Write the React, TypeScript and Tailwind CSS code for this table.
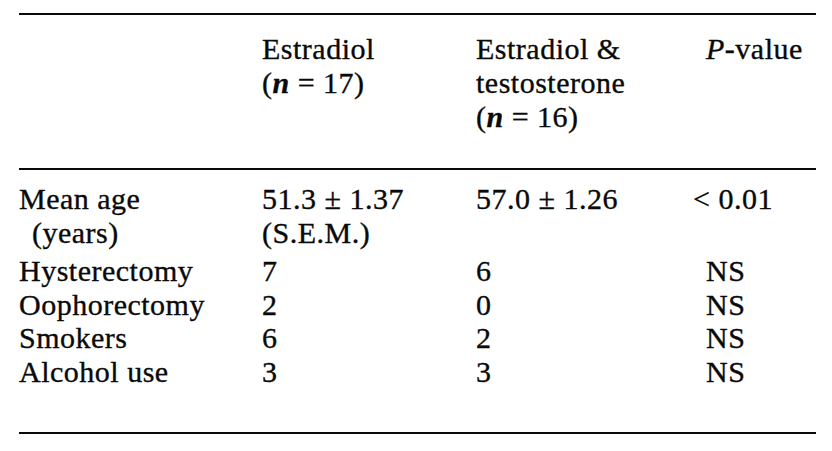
const rows = [
  { label: "Hysterectomy", a: "7", b: "6", p: "NS" },
  { label: "Oophorectomy", a: "2", b: "0", p: "NS" },
  { label: "Smokers", a: "6", b: "2", p: "NS" },
  { label: "Alcohol use", a: "3", b: "3", p: "NS" },
];

export default function App() {
  return (
    <div className="w-[832px] h-[451px] bg-white text-[#0a0a0a] font-['Liberation_Serif',serif] text-[30px] leading-[33px] tracking-[0.5px] [-webkit-text-stroke:0.35px_#0a0a0a] overflow-hidden">
      <div className="ml-[19px] w-[797px] pt-[13px]">
        <div className="h-[2px] bg-[#0a0a0a]" />

        {/* header */}
        <div className="grid grid-cols-[243px_214px_230px_1fr] pt-[17px] pb-[34px] leading-[34px]">
          <div />
          <div>
            <div>Estradiol</div>
            <div>
              (<span className="italic font-bold">n</span> = 17)
            </div>
          </div>
          <div>
            <div>Estradiol &amp;</div>
            <div>testosterone</div>
            <div>
              (<span className="italic font-bold">n</span> = 16)
            </div>
          </div>
          <div>
            <span className="italic">P</span>-value
          </div>
        </div>

        <div className="h-[2px] bg-[#0a0a0a]" />

        {/* body */}
        <div className="grid grid-cols-[243px_214px_230px_1fr] pt-[12px] leading-[34px]">
          <div>
            <div>Mean age</div>
            <div className="pl-[13px]">(years)</div>
          </div>
          <div>
            <div>51.3 ± 1.37</div>
            <div>(S.E.M.)</div>
          </div>
          <div>57.0 ± 1.26</div>
          <div className="-ml-[13px]">&lt;&nbsp;0.01</div>
        </div>
        <div className="grid grid-cols-[243px_214px_230px_1fr] pt-[4px] pb-[44px] leading-[33.5px]">
          {rows.map((r) => (
            <div key={r.label} className="contents">
              <div>{r.label}</div>
              <div>{r.a}</div>
              <div>{r.b}</div>
              <div>{r.p}</div>
            </div>
          ))}
        </div>

        <div className="h-[2px] bg-[#0a0a0a]" />
      </div>
    </div>
  );
}
